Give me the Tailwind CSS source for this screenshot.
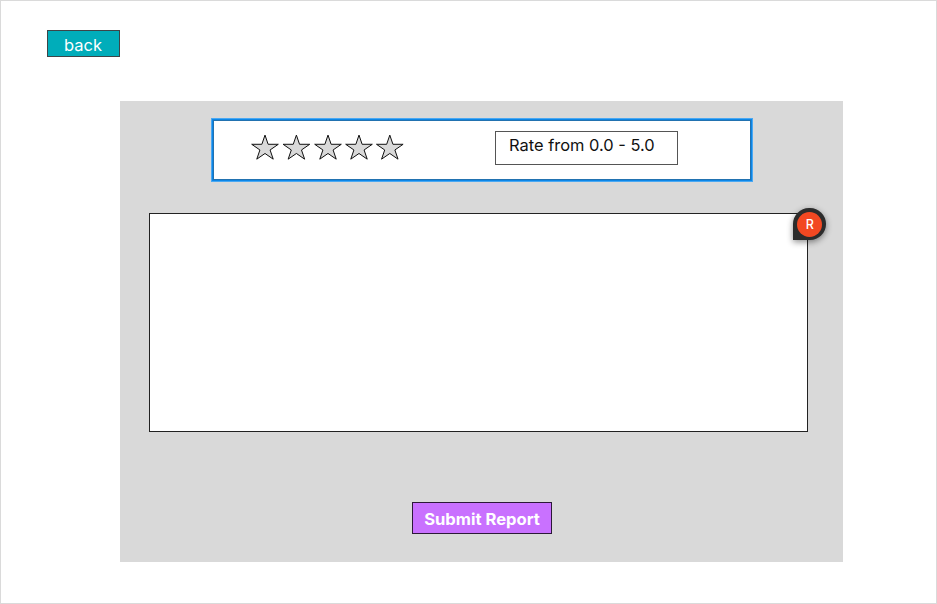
<!DOCTYPE html>
<html lang="en">
<head>
<meta charset="utf-8">
<title>Report</title>
<script src="https://cdn.jsdelivr.net/npm/@tailwindcss/browser@4"></script>
</head>
<body class="h-[604px] w-[937px] overflow-hidden bg-white font-['Inter',sans-serif]">
<svg class="hidden"><defs><path id="star" d="M15 1.7L18.14 10.89H28.31L20.09 16.57L23.23 25.76L15 20.08L6.77 25.76L9.91 16.57L1.69 10.89H11.86Z" fill="#d9d9d9" stroke="#111" stroke-width="1"/></defs></svg>
<main class="flex h-full w-full flex-col items-start border border-[#dadada] pt-[29px]">
  <button class="ml-[46px] h-[27px] w-[73px] shrink-0 border border-[#3d4548] bg-[#00adba] pr-px pt-[4px] text-[16.5px] leading-[21px] text-white">back</button>
  <section class="relative ml-[119px] mt-[44px] flex h-[461px] w-[723px] shrink-0 flex-col items-start bg-[#d9d9d9] pt-[17px]">
    <div class="ml-[91px] flex h-[64px] w-[542px] shrink-0 items-start border border-[#4aa8f2] bg-white">
      <div class="flex h-full w-full items-start border border-[#0d86e6]">
        <div class="flex h-full w-full items-start border border-[#2272b0]">
          <svg class="ml-[36px] mt-[12px] h-[28px] w-[155px]" viewBox="0 0 155 28">
            <use href="#star" x="0" y=".4"/>
            <use href="#star" x="31.4" y=".4"/>
            <use href="#star" x="63" y=".4"/>
            <use href="#star" x="94" y=".4"/>
            <use href="#star" x="124.8" y=".4"/>
          </svg>
          <div class="ml-[90px] mt-[10px] h-[34px] w-[183px] border border-[#555] pl-[13px] pt-[2px] text-[16.45px] leading-[23px] whitespace-nowrap text-[#111]">Rate from 0.0 - 5.0</div>
        </div>
      </div>
    </div>
    <div class="ml-[29px] mt-[31px] h-[219px] w-[659px] shrink-0 border border-[#222] bg-white"></div>
    <button class="ml-[292px] mt-[70px] h-[32px] w-[140px] shrink-0 border border-[#2c1938] bg-[#c971ff] pt-px text-[16.6px] leading-[28px] font-bold whitespace-nowrap text-white">Submit Report</button>
    <div class="absolute left-[673.2px] top-[107px] flex size-[32.4px] items-center justify-center rounded-t-full rounded-br-full bg-[#2c2c2c] shadow-[0_2px_6px_rgba(0,0,0,0.45)]">
      <span class="flex size-[25px] items-center justify-center rounded-full bg-[#f24822] pl-px pt-[2px] text-[12.5px] font-medium text-white">R</span>
    </div>
  </section>
</main>
</body>
</html>
